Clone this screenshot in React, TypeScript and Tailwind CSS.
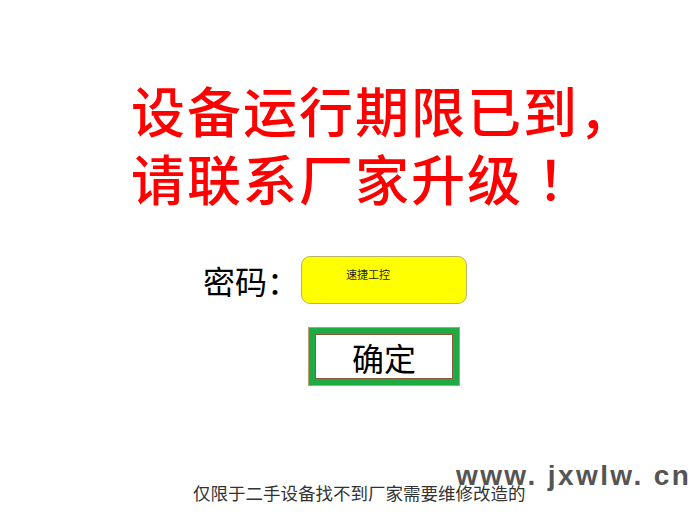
import React from 'react';

export default function App() {
  return (
    <div className="relative w-[700px] h-[524px] bg-white overflow-hidden" style={{ fontFamily: '"Noto Sans CJK SC", sans-serif' }}>
      <div className="flex flex-col pt-[76px] pl-[131px]">
        <div className="text-[54px] leading-[68px] font-medium text-[#ff0000] tracking-[2px] whitespace-nowrap">
          <div>设备运行期限已到，</div>
          <div>请联系厂家升级&nbsp;！</div>
        </div>
      </div>

      <div className="flex items-center mt-[44px] pl-[203px]">
        <span className="text-[32px] leading-none text-black">密码：</span>
        <div className="ml-[2px] w-[166px] h-[48px] bg-[#ffff00] border border-[#b5b56a] rounded-[9px] flex items-start pt-[12px] pl-[44px]">
          <span className="text-[11px] leading-none text-[#222]">速捷工控</span>
        </div>
      </div>

      <div className="flex mt-[24px] pl-[309px]">
        <button className="w-[150px] h-[57px] bg-white border-[6px] border-[#1faa44] outline outline-1 outline-[#c49a6c] flex items-center justify-center">
          <span className="block w-full h-full border border-[#8a5a3a] flex items-center justify-center text-[32px] leading-none text-black">确定</span>
        </button>
      </div>

      <div className="absolute left-[193px] top-[484px] text-[17.5px] leading-none text-[#333] whitespace-nowrap">
        仅限于二手设备找不到厂家需要维修改造的
      </div>
      <div className="absolute left-[456px] top-[462px] text-[28px] leading-none font-bold text-[#555] tracking-[2.4px] whitespace-nowrap" style={{ fontFamily: '"Liberation Sans", sans-serif' }}>
        www. jxwlw. cn
      </div>
    </div>
  );
}
